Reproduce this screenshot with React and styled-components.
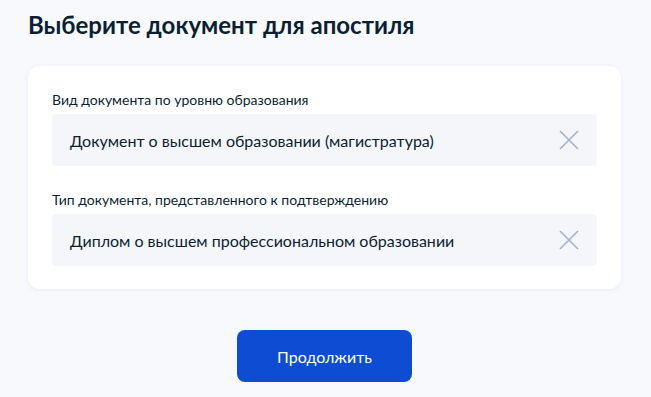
import React from 'react';
import styled, { createGlobalStyle } from 'styled-components';

const GlobalStyle = createGlobalStyle`
    body {
        margin: 0;
        background: #f8f9fd;
        font-family: Lato, "Noto Sans", sans-serif;
        color: #0b1f33;
    }
`

const Page = styled.main`
    padding: 8px 28px 0 28px;
    width: 593px;
`
const Title = styled.h1`
    margin: 0;
    font-size: 24px;
    line-height: 34px;
    font-weight: 700;
    color: #0b1f33;
`
const Card = styled.section`
    margin-top: 24px;
    background: #fff;
    border-radius: 12px;
    box-shadow: 0 1px 4px rgba(231, 236, 245, 0.9);
    padding: 24px 24px 23px 24px;
    display: flex;
    flex-direction: column;
    gap: 24px;
`
const Field = styled.div`
    display: flex;
    flex-direction: column;
    gap: 4px;
`
const Label = styled.label`
    font-size: 14px;
    line-height: 20px;
    color: #0b1f33;
`
const Select = styled.div`
    height: 52px;
    box-sizing: border-box;
    background: #f5f6fa;
    border-radius: 4px;
    display: flex;
    align-items: center;
    justify-content: space-between;
    padding: 0 18px 0 18px;
    font-size: 16px;
    color: #0b1f33;
`
const ClearIcon = styled.svg`
    width: 20px;
    height: 20px;
    flex: none;
`
const Actions = styled.div`
    display: flex;
    justify-content: center;
    margin-top: 41px;
`
const Button = styled.button`
    width: 175px;
    height: 52px;
    border: none;
    border-radius: 8px;
    background: #0d4cd3;
    color: #fff;
    font-family: Lato, "Noto Sans", sans-serif;
    font-size: 16px;
    cursor: pointer;
`

const Cross = () => (
    <ClearIcon viewBox="0 0 20 20">
        <path d="M1 1 L19 19 M19 1 L1 19" stroke="#a3b1d1" strokeWidth="1.6" fill="none" />
    </ClearIcon>
)

const fields = [
    { label: 'Вид документа по уровню образования', value: 'Документ о высшем образовании (магистратура)' },
    { label: 'Тип документа, представленного к подтверждению', value: 'Диплом о высшем профессиональном образовании' },
]

export default function App() {
    return (
        <Page>
            <GlobalStyle />
            <Title>Выберите документ для апостиля</Title>
            <Card>
                {fields.map(f => (
                    <Field key={f.label}>
                        <Label>{f.label}</Label>
                        <Select>
                            <span>{f.value}</span>
                            <Cross />
                        </Select>
                    </Field>
                ))}
            </Card>
            <Actions>
                <Button>Продолжить</Button>
            </Actions>
        </Page>
    )
}
